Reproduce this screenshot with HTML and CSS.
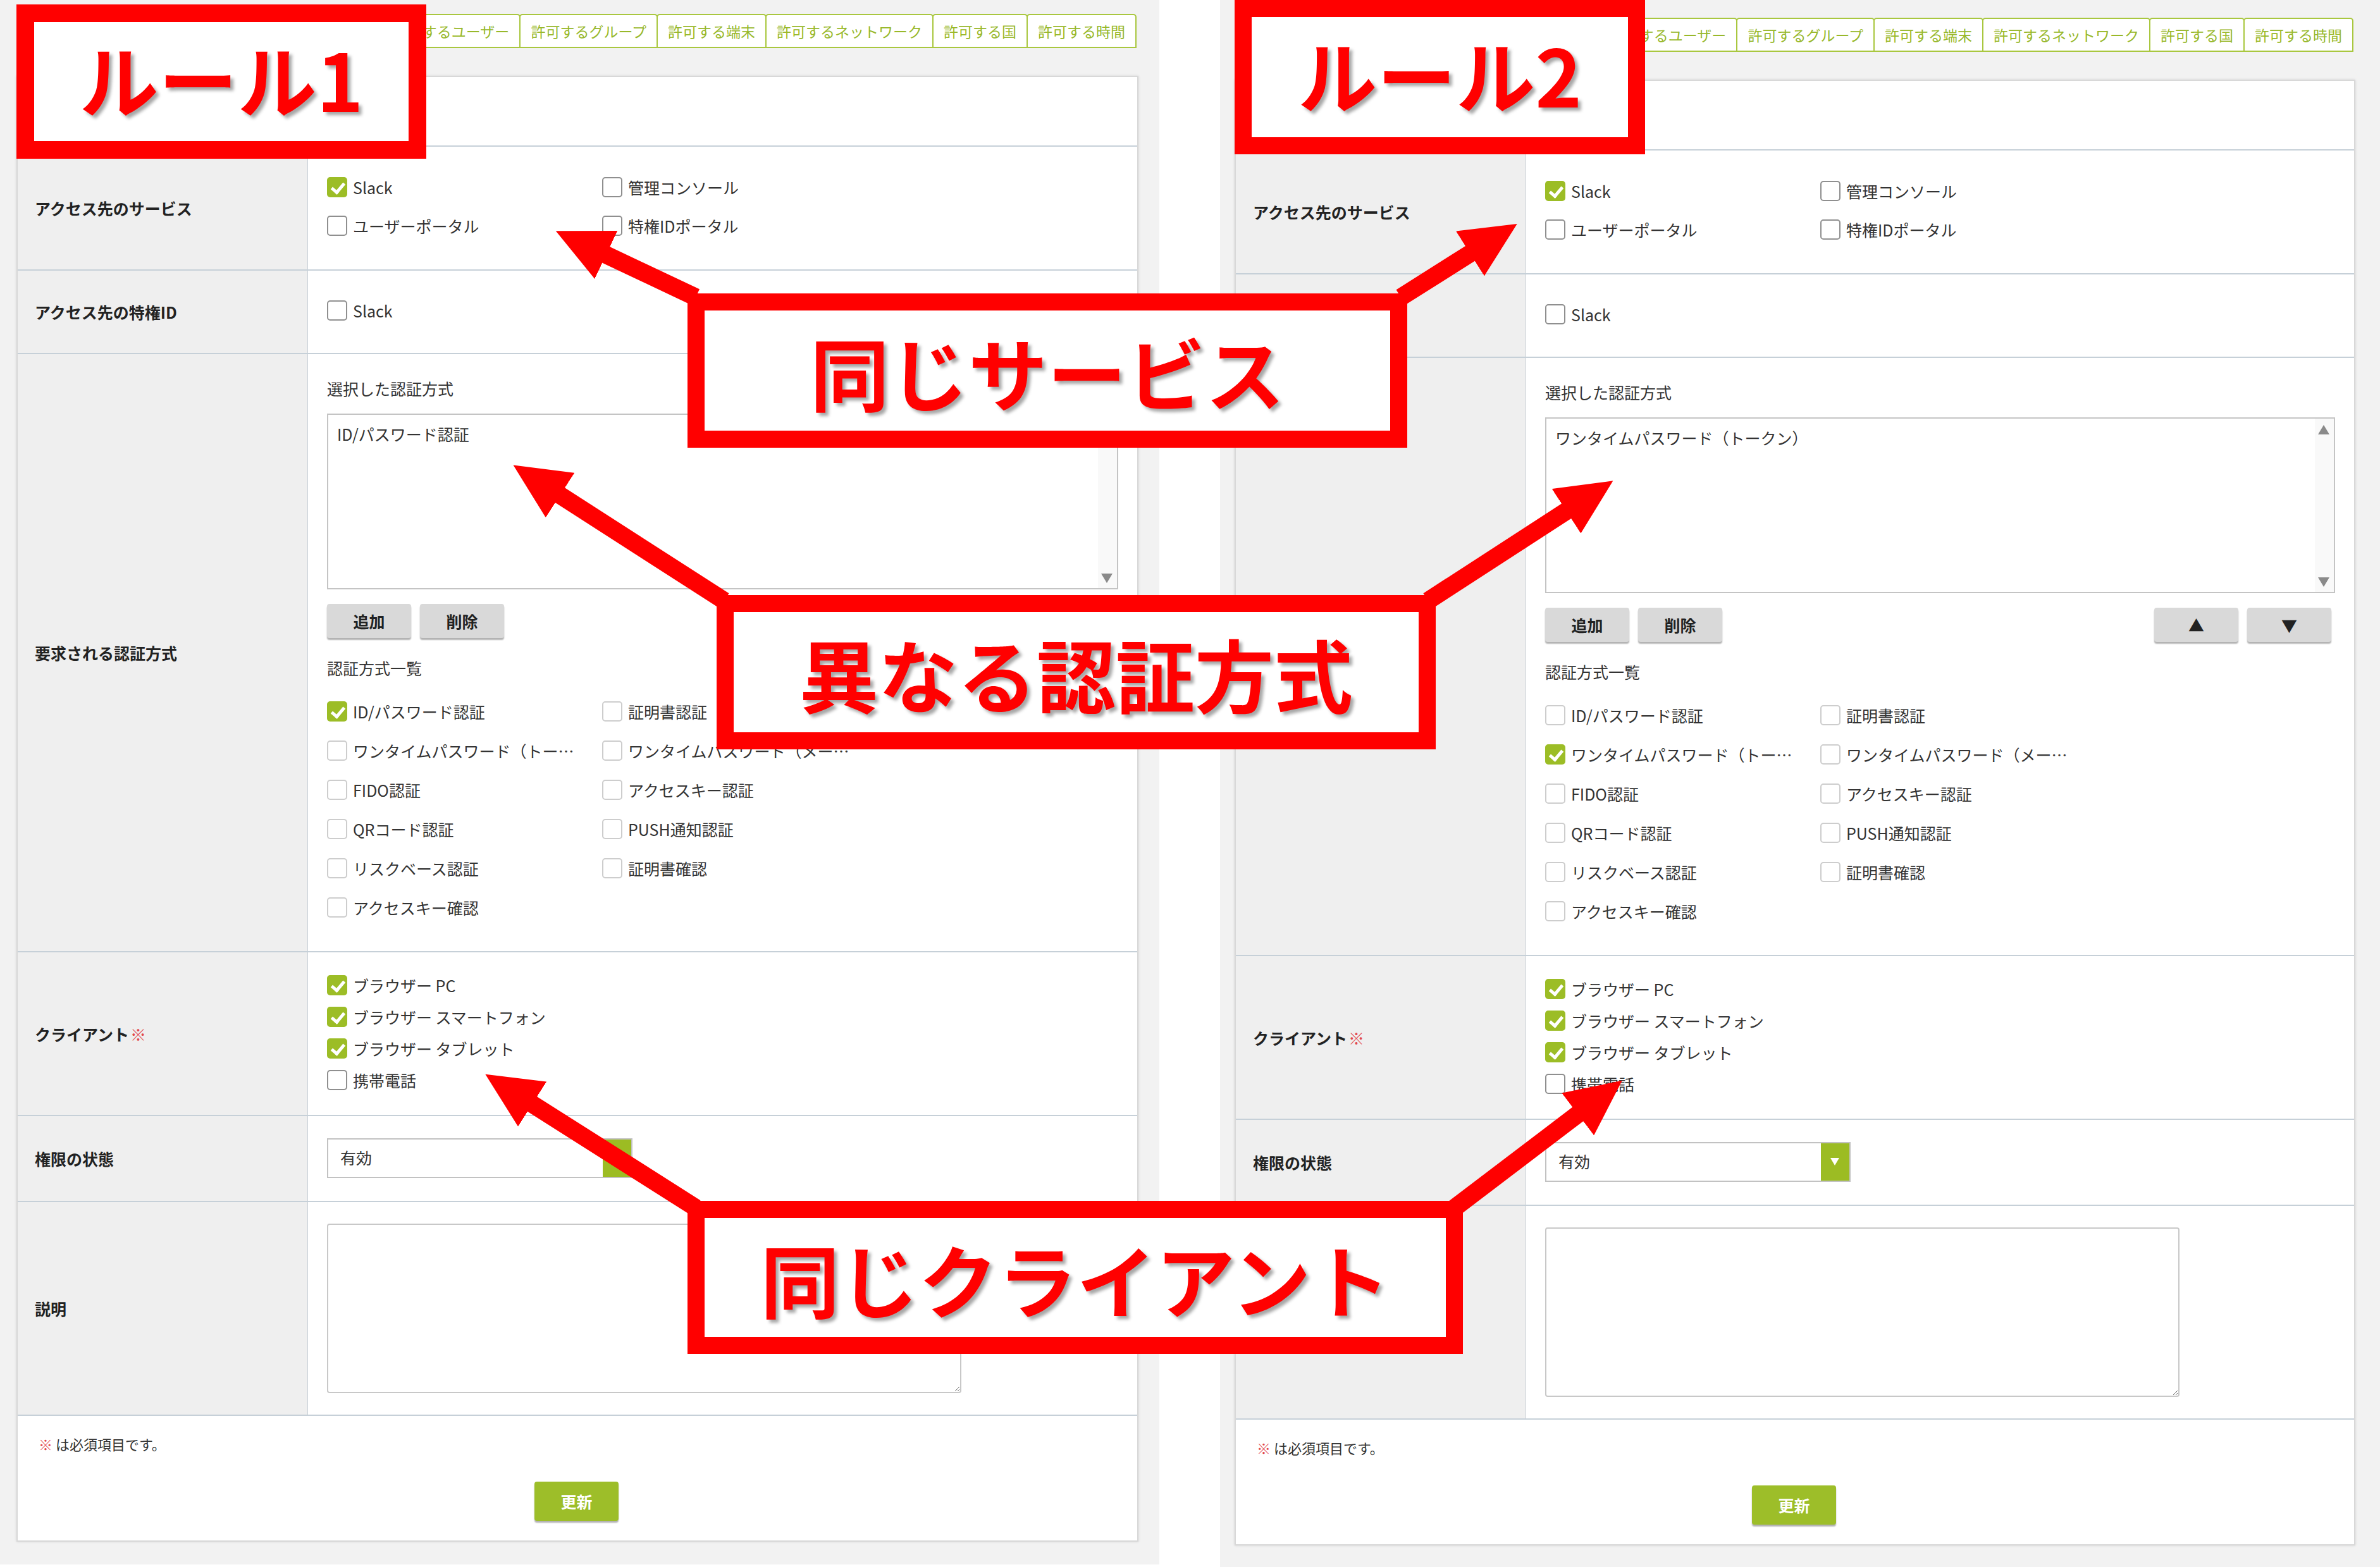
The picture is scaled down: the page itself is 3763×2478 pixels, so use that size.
FILE: index.html
```html
<!DOCTYPE html>
<html lang="ja">
<head>
    <meta charset="UTF-8">
    <title>ルール比較</title>
    <link rel="stylesheet" href="styles.css">
</head>
<body>
<div class="page">

    <!-- rule 1 -->
    <div class="shot shot-1">
        <div class="tabs">
            <span class="tab">許可するユーザー</span>
            <span class="tab">許可するグループ</span>
            <span class="tab">許可する端末</span>
            <span class="tab">許可するネットワーク</span>
            <span class="tab">許可する国</span>
            <span class="tab">許可する時間</span>
        </div>
        <div class="panel">
            <div class="head"></div>

            <div class="row row-service">
                <div class="label">アクセス先のサービス</div>
                <div class="val">
                    <div class="checks two">
                        <label class="opt"><span class="cb on"></span>Slack</label>
                        <label class="opt"><span class="cb"></span>管理コンソール</label>
                        <label class="opt"><span class="cb"></span>ユーザーポータル</label>
                        <label class="opt"><span class="cb"></span>特権IDポータル</label>
                    </div>
                </div>
            </div>

            <div class="row row-priv">
                <div class="label">アクセス先の特権ID</div>
                <div class="val">
                    <label class="opt"><span class="cb"></span>Slack</label>
                </div>
            </div>

            <div class="row row-auth">
                <div class="label">要求される認証方式</div>
                <div class="val">
                    <div class="caption">選択した認証方式</div>
                    <div class="listbox">
                        ID/パスワード認証
                        <span class="sb-up"></span>
                        <span class="sb-down"></span>
                    </div>
                    <div class="btn-row">
                        <span class="btn">追加</span>
                        <span class="btn">削除</span>
                        <span class="btn move">▲</span>
                        <span class="btn">▼</span>
                    </div>
                    <div class="caption list-title">認証方式一覧</div>
                    <div class="checks two light">
                        <label class="opt"><span class="cb on"></span><span class="txt">ID/パスワード認証</span></label>
                        <label class="opt"><span class="cb"></span><span class="txt">証明書認証</span></label>
                        <label class="opt"><span class="cb"></span><span class="txt">ワンタイムパスワード（トークン）</span></label>
                        <label class="opt"><span class="cb"></span><span class="txt">ワンタイムパスワード（メール）</span></label>
                        <label class="opt"><span class="cb"></span><span class="txt">FIDO認証</span></label>
                        <label class="opt"><span class="cb"></span><span class="txt">アクセスキー認証</span></label>
                        <label class="opt"><span class="cb"></span><span class="txt">QRコード認証</span></label>
                        <label class="opt"><span class="cb"></span><span class="txt">PUSH通知認証</span></label>
                        <label class="opt"><span class="cb"></span><span class="txt">リスクベース認証</span></label>
                        <label class="opt"><span class="cb"></span><span class="txt">証明書確認</span></label>
                        <label class="opt"><span class="cb"></span><span class="txt">アクセスキー確認</span></label>
                    </div>
                </div>
            </div>

            <div class="row row-client">
                <div class="label">クライアント<span class="req">※</span></div>
                <div class="val">
                    <div class="checks one">
                        <label class="opt"><span class="cb on"></span>ブラウザー PC</label>
                        <label class="opt"><span class="cb on"></span>ブラウザー スマートフォン</label>
                        <label class="opt"><span class="cb on"></span>ブラウザー タブレット</label>
                        <label class="opt"><span class="cb"></span>携帯電話</label>
                    </div>
                </div>
            </div>

            <div class="row row-status">
                <div class="label">権限の状態</div>
                <div class="val">
                    <div class="select"><span class="select-text">有効</span><span class="select-btn"></span></div>
                </div>
            </div>

            <div class="row row-desc">
                <div class="label">説明</div>
                <div class="val">
                    <textarea class="memo"></textarea>
                </div>
            </div>

            <div class="foot">
                <p class="note"><span class="req">※</span> は必須項目です。</p>
                <div class="submit-wrap"><span class="submit">更新</span></div>
            </div>
        </div>
    </div>

    <!-- rule 2 -->
    <div class="shot shot-2">
        <div class="tabs">
            <span class="tab">許可するユーザー</span>
            <span class="tab">許可するグループ</span>
            <span class="tab">許可する端末</span>
            <span class="tab">許可するネットワーク</span>
            <span class="tab">許可する国</span>
            <span class="tab">許可する時間</span>
        </div>
        <div class="panel">
            <div class="head"></div>

            <div class="row row-service">
                <div class="label">アクセス先のサービス</div>
                <div class="val">
                    <div class="checks two">
                        <label class="opt"><span class="cb on"></span>Slack</label>
                        <label class="opt"><span class="cb"></span>管理コンソール</label>
                        <label class="opt"><span class="cb"></span>ユーザーポータル</label>
                        <label class="opt"><span class="cb"></span>特権IDポータル</label>
                    </div>
                </div>
            </div>

            <div class="row row-priv">
                <div class="label">アクセス先の特権ID</div>
                <div class="val">
                    <label class="opt"><span class="cb"></span>Slack</label>
                </div>
            </div>

            <div class="row row-auth">
                <div class="label">要求される認証方式</div>
                <div class="val">
                    <div class="caption">選択した認証方式</div>
                    <div class="listbox">
                        ワンタイムパスワード（トークン）
                        <span class="sb-up"></span>
                        <span class="sb-down"></span>
                    </div>
                    <div class="btn-row">
                        <span class="btn">追加</span>
                        <span class="btn">削除</span>
                        <span class="btn move">▲</span>
                        <span class="btn">▼</span>
                    </div>
                    <div class="caption list-title">認証方式一覧</div>
                    <div class="checks two light">
                        <label class="opt"><span class="cb"></span><span class="txt">ID/パスワード認証</span></label>
                        <label class="opt"><span class="cb"></span><span class="txt">証明書認証</span></label>
                        <label class="opt"><span class="cb on"></span><span class="txt">ワンタイムパスワード（トークン）</span></label>
                        <label class="opt"><span class="cb"></span><span class="txt">ワンタイムパスワード（メール）</span></label>
                        <label class="opt"><span class="cb"></span><span class="txt">FIDO認証</span></label>
                        <label class="opt"><span class="cb"></span><span class="txt">アクセスキー認証</span></label>
                        <label class="opt"><span class="cb"></span><span class="txt">QRコード認証</span></label>
                        <label class="opt"><span class="cb"></span><span class="txt">PUSH通知認証</span></label>
                        <label class="opt"><span class="cb"></span><span class="txt">リスクベース認証</span></label>
                        <label class="opt"><span class="cb"></span><span class="txt">証明書確認</span></label>
                        <label class="opt"><span class="cb"></span><span class="txt">アクセスキー確認</span></label>
                    </div>
                </div>
            </div>

            <div class="row row-client">
                <div class="label">クライアント<span class="req">※</span></div>
                <div class="val">
                    <div class="checks one">
                        <label class="opt"><span class="cb on"></span>ブラウザー PC</label>
                        <label class="opt"><span class="cb on"></span>ブラウザー スマートフォン</label>
                        <label class="opt"><span class="cb on"></span>ブラウザー タブレット</label>
                        <label class="opt"><span class="cb"></span>携帯電話</label>
                    </div>
                </div>
            </div>

            <div class="row row-status">
                <div class="label">権限の状態</div>
                <div class="val">
                    <div class="select"><span class="select-text">有効</span><span class="select-btn"></span></div>
                </div>
            </div>

            <div class="row row-desc">
                <div class="label">説明</div>
                <div class="val">
                    <textarea class="memo"></textarea>
                </div>
            </div>

            <div class="foot">
                <p class="note"><span class="req">※</span> は必須項目です。</p>
                <div class="submit-wrap"><span class="submit">更新</span></div>
            </div>
        </div>
    </div>

    <!-- annotation arrows -->
    <svg class="arrows" width="3763" height="2478" viewBox="0 0 3763 2478">
        <defs>
            <marker id="head" markerUnits="userSpaceOnUse" markerWidth="90" markerHeight="84" refX="28" refY="42" orient="auto">
                <path d="M0,0 L88,42 L0,84 z" fill="#ff0000"/>
            </marker>
        </defs>
        <g stroke="#ff0000" stroke-width="28" fill="none" marker-end="url(#head)">
            <path d="M1100,470 L933,391"/>
            <path d="M2215,470 L2348,386"/>
            <path d="M1145,950 L862,768"/>
            <path d="M2258,950 L2500,793"/>
            <path d="M1100,1910 L818,1731"/>
            <path d="M2300,1910 L2517,1745"/>
        </g>
    </svg>

    <div class="callout rule-1">ルール1</div>
    <div class="callout rule-2">ルール2</div>
    <div class="callout same-service">同じサービス</div>
    <div class="callout diff-auth">異なる認証方式</div>
    <div class="callout same-client">同じクライアント</div>
</div>
</body>
</html>
```

FILE: styles.css
```css
* {
    margin: 0;
    padding: 0;
    box-sizing: border-box;
}

body {
    font-family: "Noto Sans CJK JP", "Noto Sans", sans-serif;
    color: #333;
    background: #fff;
}

.page {
    position: relative;
    display: flex;
    width: 3763px;
    height: 2478px;
    overflow: hidden;
    background: #fff;
}

/* each screenshot */
.shot {
    background: #f2f2f2;
}

.shot-1 {
    width: 1833px;
    height: 2474px;
    padding: 22px 33px 0 26px;
}

.shot-2 {
    width: 1834px;
    height: 2478px;
    margin-left: 96px;
    padding: 28px 39px 0 23px;
}

/* tabs */
.tabs {
    display: flex;
    justify-content: flex-end;
    height: 54px;
    padding-right: 3px;
}

.tab {
    display: block;
    height: 54px;
    padding: 0 16px;
    margin-left: -2px;
    border: 2px solid #a9c73f;
    border-radius: 5px 5px 0 0;
    background: #fff;
    color: #98b82a;
    font-size: 23px;
    line-height: 50px;
    white-space: nowrap;
}

/* form panel */
.panel {
    margin-top: 44px;
    background: #fff;
    border: 2px solid #d8d8d8;
    box-shadow: 0 0 4px rgba(0, 0, 0, 0.12);
}

.head {
    height: 110px;
    border-bottom: 2px solid #c6d0d8;
}

.row {
    display: grid;
    grid-template-columns: 459px 1fr;
    border-bottom: 2px solid #c6d0d8;
}

.label {
    display: flex;
    align-items: center;
    padding-left: 27px;
    background: #efefef;
    border-right: 1px solid #c9d1d7;
    font-size: 25px;
    font-weight: bold;
    color: #222;
}

.req {
    color: #e2474b;
    font-weight: normal;
    margin-left: 2px;
}

.val {
    padding: 0 30px;
}

.row-service .val { padding-top: 45px; padding-bottom: 51px; }
.row-priv .val { padding-top: 44px; padding-bottom: 49px; }
.row-auth .val { padding-top: 36px; padding-bottom: 51px; }
.row-client .val { padding-top: 33px; padding-bottom: 37px; }
.row-status .val { padding-top: 35px; padding-bottom: 36px; }
.row-desc .val { padding-top: 34px; padding-bottom: 34px; }

/* checkboxes */
.checks.two {
    display: grid;
    grid-template-columns: 435px 435px;
    row-gap: 24px;
}

.checks.two.light {
    row-gap: 25px;
}

.checks.one {
    display: flex;
    flex-direction: column;
    gap: 13px;
}

.opt {
    display: flex;
    align-items: center;
    height: 37px;
    font-size: 25px;
    color: #333;
    white-space: nowrap;
}

.opt .txt {
    overflow: hidden;
    text-overflow: ellipsis;
    max-width: 355px;
}

.cb {
    position: relative;
    flex: none;
    width: 32px;
    height: 32px;
    margin-right: 9px;
    border: 2px solid #8f8f8f;
    border-radius: 5px;
    background: #fff;
}

.light .cb {
    border-color: #cdcdcd;
}

.cb.on,
.light .cb.on {
    background: #9cbd26;
    border-color: #9cbd26;
}

.cb.on::after {
    content: "";
    position: absolute;
    left: 9px;
    top: 3px;
    width: 8px;
    height: 16px;
    border-right: 5px solid #fff;
    border-bottom: 5px solid #fff;
    transform: rotate(40deg);
}

/* selected list */
.caption {
    font-size: 25px;
    line-height: 37px;
    color: #333;
}

.listbox {
    position: relative;
    height: 278px;
    margin-top: 21px;
    padding: 12px 14px;
    border: 2px solid #c4c4c4;
    background: linear-gradient(to left, #f9f9f9 30px, #fff 30px);
    font-size: 25px;
    line-height: 37px;
}

.sb-up,
.sb-down {
    position: absolute;
    right: 7px;
    width: 0;
    height: 0;
    border-left: 9px solid transparent;
    border-right: 9px solid transparent;
}

.sb-up {
    top: 10px;
    border-bottom: 15px solid #8a8a8a;
}

.sb-down {
    bottom: 8px;
    border-top: 15px solid #8a8a8a;
}

.btn-row {
    display: flex;
    gap: 14px;
    margin-top: 23px;
    padding-right: 6px;
}

.btn {
    display: flex;
    align-items: center;
    justify-content: center;
    width: 133px;
    height: 54px;
    background: #d9d9d9;
    border-radius: 4px;
    box-shadow: 0 3px 2px rgba(0, 0, 0, 0.3);
    font-size: 25px;
    font-weight: bold;
    color: #222;
}

.btn.move {
    margin-left: auto;
}

.list-title {
    margin-top: 29px;
    margin-bottom: 31px;
}

/* select */
.select {
    display: flex;
    width: 483px;
    height: 63px;
    border: 2px solid #c2c2c2;
    background: #fff;
}

.select-text {
    flex: 1;
    padding-left: 19px;
    font-size: 25px;
    line-height: 56px;
    color: #333;
}

.select-btn {
    position: relative;
    width: 45px;
    background: #9cbc23;
}

.select-btn::after {
    content: "";
    position: absolute;
    left: 15px;
    top: 23px;
    border-left: 7px solid transparent;
    border-right: 7px solid transparent;
    border-top: 12px solid #fff;
}

/* description */
.memo {
    display: block;
    width: 1003px;
    height: 268px;
    border: 2px solid #c8c8c8;
    border-radius: 4px;
    background: #fff;
    resize: both;
    font-family: inherit;
}

/* footer */
.foot {
    padding: 28px 0 31px 33px;
}

.note {
    font-size: 22px;
    line-height: 32px;
    color: #333;
}

.note .req {
    margin-left: 0;
}

.submit-wrap {
    display: flex;
    justify-content: center;
    margin-top: 44px;
    padding-right: 36px;
}

.submit {
    display: flex;
    align-items: center;
    justify-content: center;
    width: 133px;
    height: 62px;
    background: #9dbe29;
    border-radius: 4px;
    box-shadow: 0 3px 2px rgba(0, 0, 0, 0.3);
    color: #fff;
    font-size: 25px;
    font-weight: bold;
}

/* annotations */
.arrows {
    position: absolute;
    left: 0;
    top: 0;
}

.callout {
    position: absolute;
    display: flex;
    align-items: center;
    justify-content: center;
    border: 27px solid #ff0000;
    background: #fff;
    color: #ff0000;
    font-size: 125px;
    font-weight: bold;
    line-height: 1;
    white-space: nowrap;
    text-shadow: 5px 5px 5px rgba(0, 0, 0, 0.35);
}

.rule-1 {
    left: 26px;
    top: 7px;
    width: 648px;
    height: 244px;
    border-width: 28px;
    padding-bottom: 14px;
}

.rule-2 {
    left: 1952px;
    top: 0;
    width: 649px;
    height: 244px;
    padding-bottom: 14px;
}

.same-service {
    left: 1087px;
    top: 464px;
    width: 1138px;
    height: 244px;
}

.diff-auth {
    left: 1133px;
    top: 941px;
    width: 1137px;
    height: 244px;
}

.same-client {
    left: 1087px;
    top: 1899px;
    width: 1226px;
    height: 242px;
}
```
